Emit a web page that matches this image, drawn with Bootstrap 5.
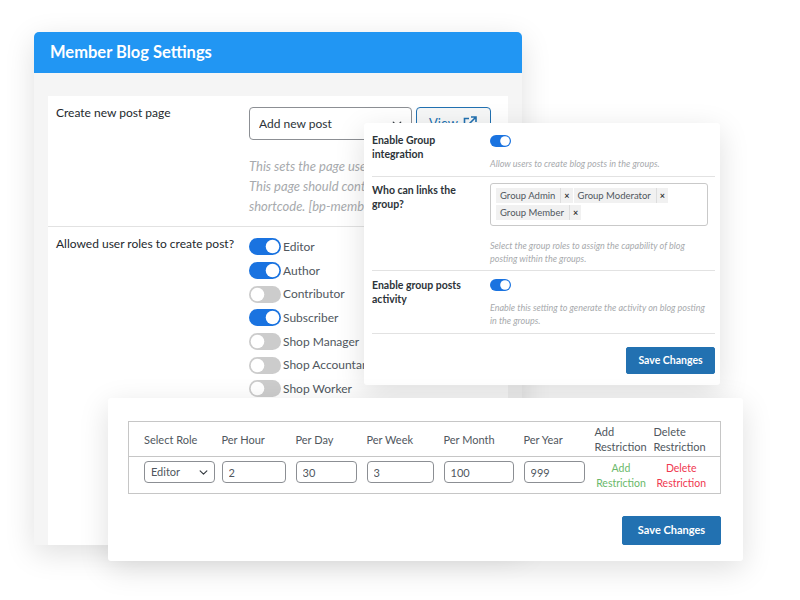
<!DOCTYPE html>
<html lang="en">
<head>
  <meta charset="UTF-8" />
  <meta name="viewport" content="width=device-width, initial-scale=1.0" />
  <title>Member Blog Settings</title>
  <link href="https://cdn.jsdelivr.net/npm/bootstrap@5.3.0/dist/css/bootstrap.min.css" rel="stylesheet" />
  <style>
    body {
      background: #fff;
      color: #32373c;
      font-family: "Lato", "Open Sans", sans-serif;
      font-size: 12px;
      overflow: hidden;
    }
    .canvas { position: relative; width: 800px; height: 600px; overflow: hidden; }
    .win {
      position: absolute;
      background: #fff;
      border: 0;
      box-shadow: 0 8px 30px rgba(0, 0, 0, .13);
    }
    .win-main { left: 34px; top: 32px; width: 488px; height: 513px; background: #f5f5f5; border-radius: 5px 5px 0 0; }
    .win-group { left: 364px; top: 123px; width: 356px; height: 262px; padding: 0 5px 0 8px; border-radius: 3px; }
    .win-limit { left: 108px; top: 398px; width: 635px; height: 163px; padding: 23px 22px 0 20px; border-radius: 3px; }

    .win-head { background: #2196f3; color: #fff; height: 41px; padding: 0 16px; font-size: 16.5px; font-weight: 700; line-height: 41px; border-radius: 5px 5px 0 0; }
    .main-body { margin: 23px 14px 0; background: #fff; flex-grow: 1; }
    .main-row { border-bottom: 1px solid #e2e2e2; display: flex; }
    .main-row:last-child { border-bottom: 0; }
    .main-label { width: 201px; padding: 9px 0 0 8px; color: #23282d; line-height: 16px; flex: none; }
    .page-pick { margin-top: 11px; }
    .page-select { width: 163px; height: 33px; font-size: 12px; padding: 0 9px; border: 1px solid #8c8f94; border-radius: 4px; color: #2c3338; background-position: right 8px center; background-size: 12px 10px; }
    .view-btn { width: 75px; height: 33px; font-size: 13px; color: #2271b1; border: 1px solid #2271b1; border-radius: 4px; padding: 0 0 0 12px; text-align: left; background: #f6f7f7; }
    .view-btn svg { margin-left: 2px; vertical-align: -2px; }
    .main-help { width: 260px; margin: 16px 0 10px; color: #a7aaad; font-size: 13px; font-style: italic; line-height: 20px; white-space: nowrap; }
    .role-list { padding-top: 8px; }
    .role-line { height: 23.7px; margin: 0; padding: 0; min-height: 0; display: flex; align-items: center; gap: 2px; color: #50575e; }

    .form-switch .sw, .form-switch .sw:focus {
      width: 32px; height: 17px; margin: 0; float: none; border: 0; flex: none;
      background-color: #ccc; box-shadow: none;
      background-image: url("data:image/svg+xml,%3csvg xmlns='http://www.w3.org/2000/svg' viewBox='-4 -4 8 8'%3e%3ccircle r='3.2' fill='%23fff'/%3e%3c/svg%3e");
      background-position: left center;
    }
    .form-switch .sw:checked {
      background-color: #1a73e0;
      background-image: url("data:image/svg+xml,%3csvg xmlns='http://www.w3.org/2000/svg' viewBox='-4 -4 8 8'%3e%3ccircle r='3.2' fill='%23fff'/%3e%3c/svg%3e");
      background-position: right center;
    }
    .form-switch.sw-small { padding: 0; margin: 0; min-height: 0; display: flex; }
    .form-switch.sw-small .sw { width: 21px; height: 12px; }

    .grp-row { display: flex; border-bottom: 1px solid #e2e2e2; }
    .grp-one { height: 54px; }
    .grp-two { height: 94px; }
    .grp-three { height: 63px; }
    .grp-label { width: 118px; flex: none; padding: 10px 18px 0 0; font-size: 10.5px; font-weight: 700; line-height: 14px; color: #2c3338; }
    .grp-two .grp-label { padding-top: 6px; }
    .grp-three .grp-label { padding-top: 7px; }
    .grp-help { width: 218px; color: #a7aaad; font-size: 9px; font-style: italic; line-height: 13px; margin: 0; }
    .grp-one .grp-help { margin-top: 10px; }
    .grp-two .grp-help { margin-top: 13px; }
    .grp-three .grp-help { margin-top: 10px; }
    .token-pad { padding-top: 6px; }
    .token-box { width: 218px; height: 43px; border: 1px solid #c9c9c9; border-radius: 3px; padding: 4px 5px; display: flex; flex-wrap: wrap; gap: 2px 1px; align-content: flex-start; }
    .token { display: flex; height: 15px; background: #f1f1f1; color: #50575e; font-size: 9.5px; line-height: 16px; }
    .token span { padding: 0 5px 0 4px; }
    .token b { border-left: 1px solid #ddd; padding: 0 3px; font-size: 9px; color: #333; }
    .save-btn { background: #2271b1; border: 1px solid #2271b1; color: #fff; font-size: 10.5px; font-weight: 700; border-radius: 2px; padding: 0; }
    .save-btn:hover { background: #2271b1; color: #fff; }
    .save-group { width: 89px; height: 27px; margin-top: 13px; }
    .save-limit { width: 99px; height: 29px; margin-top: 22px; font-size: 11px; }

    .limit-table { table-layout: fixed; width: 593px; margin: 0; border: 1px solid #c6c6c6; font-size: 11px; color: #50575e; }
    .limit-table th, .limit-table td { padding: 4px 7px 2px 3px; border: 0; font-weight: 400; vertical-align: top; color: #50575e; line-height: 15px; }
    .limit-table th { vertical-align: middle; padding-top: 2px; padding-bottom: 2px; }
    .limit-table thead th { height: 35px; border-bottom: 1px solid #c6c6c6; }
    .limit-table .first-cell { padding-left: 15px; padding-right: 4px; }
    .limit-table .link-cell { padding: 4px 4px 2px; vertical-align: middle; }
    .limit-table .link-cell:last-child { padding-right: 12px; }
    .limit-table .form-control, .limit-table .form-select { height: 22px; min-height: 0; font-size: 11px; padding: 0 6px; border: 1px solid #8c8f94; border-radius: 4px; color: #50575e; }
    .limit-table .form-select { background-position: right 5px center; background-size: 11px 9px; }
    .limit-table a { display: block; text-align: center; text-decoration: none; font-size: 10.5px; }
    .limit-table th:nth-child(1) { width: 90px; }
    .limit-table th:nth-child(2) { width: 74px; }
    .limit-table th:nth-child(3) { width: 71px; }
    .limit-table th:nth-child(4) { width: 77px; }
    .limit-table th:nth-child(5) { width: 80px; }
    .limit-table th:nth-child(6) { width: 71px; }
    .limit-table th:nth-child(7) { width: 59px; }
    .limit-foot { width: 593px; }
    .limit-table .link-add { color: #6ab96a; }
    .limit-table .link-del { color: #f0384f; }
  </style>
</head>
<body>
  <div class="canvas">

    <!-- Back window -->
    <div class="win win-main d-flex flex-column">
      <div class="win-head">Member Blog Settings</div>
      <div class="main-body">
        <div class="main-row">
          <div class="main-label">Create new post page</div>
          <div>
            <div class="d-flex gap-1 page-pick">
              <select class="form-select page-select"><option>Add new post</option></select>
              <button class="btn view-btn" type="button">View
                <svg width="14" height="14" viewBox="0 0 14 14" fill="none" stroke="#2271b1" stroke-width="1.6"><path d="M6 2.500H1.500v10h10V8M5.500 8.500 12.500 1.500M8 1h5v5"/></svg>
              </button>
            </div>
            <p class="main-help">This sets the page used to create new posts.<br>This page should contain the following<br>shortcode. [bp-member-blog]</p>
          </div>
        </div>
        <div class="main-row">
          <div class="main-label">Allowed user roles to create post?</div>
          <div class="role-list">
            <div class="form-check form-switch role-line"><input class="form-check-input sw" type="checkbox" checked>Editor</div>
            <div class="form-check form-switch role-line"><input class="form-check-input sw" type="checkbox" checked>Author</div>
            <div class="form-check form-switch role-line"><input class="form-check-input sw" type="checkbox">Contributor</div>
            <div class="form-check form-switch role-line"><input class="form-check-input sw" type="checkbox" checked>Subscriber</div>
            <div class="form-check form-switch role-line"><input class="form-check-input sw" type="checkbox">Shop Manager</div>
            <div class="form-check form-switch role-line"><input class="form-check-input sw" type="checkbox">Shop Accountant</div>
            <div class="form-check form-switch role-line"><input class="form-check-input sw" type="checkbox">Shop Worker</div>
          </div>
        </div>
      </div>
    </div>

    <!-- Group settings window -->
    <div class="win win-group">
      <div class="grp-row grp-one">
        <div class="grp-label">Enable Group integration</div>
        <div class="pt-2 mt-1">
          <div class="form-check form-switch sw-small"><input class="form-check-input sw" type="checkbox" checked></div>
          <p class="grp-help">Allow users to create blog posts in the groups.</p>
        </div>
      </div>
      <div class="grp-row grp-two">
        <div class="grp-label">Who can links the group?</div>
        <div class="token-pad">
          <div class="token-box">
            <div class="token"><span>Group Admin</span><b>×</b></div>
            <div class="token"><span>Group Moderator</span><b>×</b></div>
            <div class="token"><span>Group Member</span><b>×</b></div>
          </div>
          <p class="grp-help">Select the group roles to assign the capability of blog posting within the groups.</p>
        </div>
      </div>
      <div class="grp-row grp-three">
        <div class="grp-label">Enable group posts activity</div>
        <div class="pt-2">
          <div class="form-check form-switch sw-small"><input class="form-check-input sw" type="checkbox" checked></div>
          <p class="grp-help">Enable this setting to generate the activity on blog posting in the groups.</p>
        </div>
      </div>
      <div class="d-flex justify-content-end">
        <button class="btn save-btn save-group" type="button">Save Changes</button>
      </div>
    </div>

    <!-- Restrictions window -->
    <div class="win win-limit">
      <table class="table limit-table">
        <thead>
          <tr>
            <th class="first-cell">Select Role</th><th>Per Hour</th><th>Per Day</th><th>Per Week</th>
            <th>Per Month</th><th>Per Year</th><th>Add Restriction</th><th>Delete Restriction</th>
          </tr>
        </thead>
        <tbody>
          <tr>
            <td class="first-cell"><select class="form-select"><option>Editor</option></select></td>
            <td><input class="form-control" value="2"></td>
            <td><input class="form-control" value="30"></td>
            <td><input class="form-control" value="3"></td>
            <td><input class="form-control" value="100"></td>
            <td><input class="form-control" value="999"></td>
            <td class="link-cell"><a class="link-add" href="#">Add Restriction</a></td>
            <td class="link-cell"><a class="link-del" href="#">Delete Restriction</a></td>
          </tr>
        </tbody>
      </table>
      <div class="d-flex justify-content-end limit-foot">
        <button class="btn save-btn save-limit" type="button">Save Changes</button>
      </div>
    </div>

  </div>
  <script src="https://cdn.jsdelivr.net/npm/bootstrap@5.3.0/dist/js/bootstrap.bundle.min.js"></script>
</body>
</html>
